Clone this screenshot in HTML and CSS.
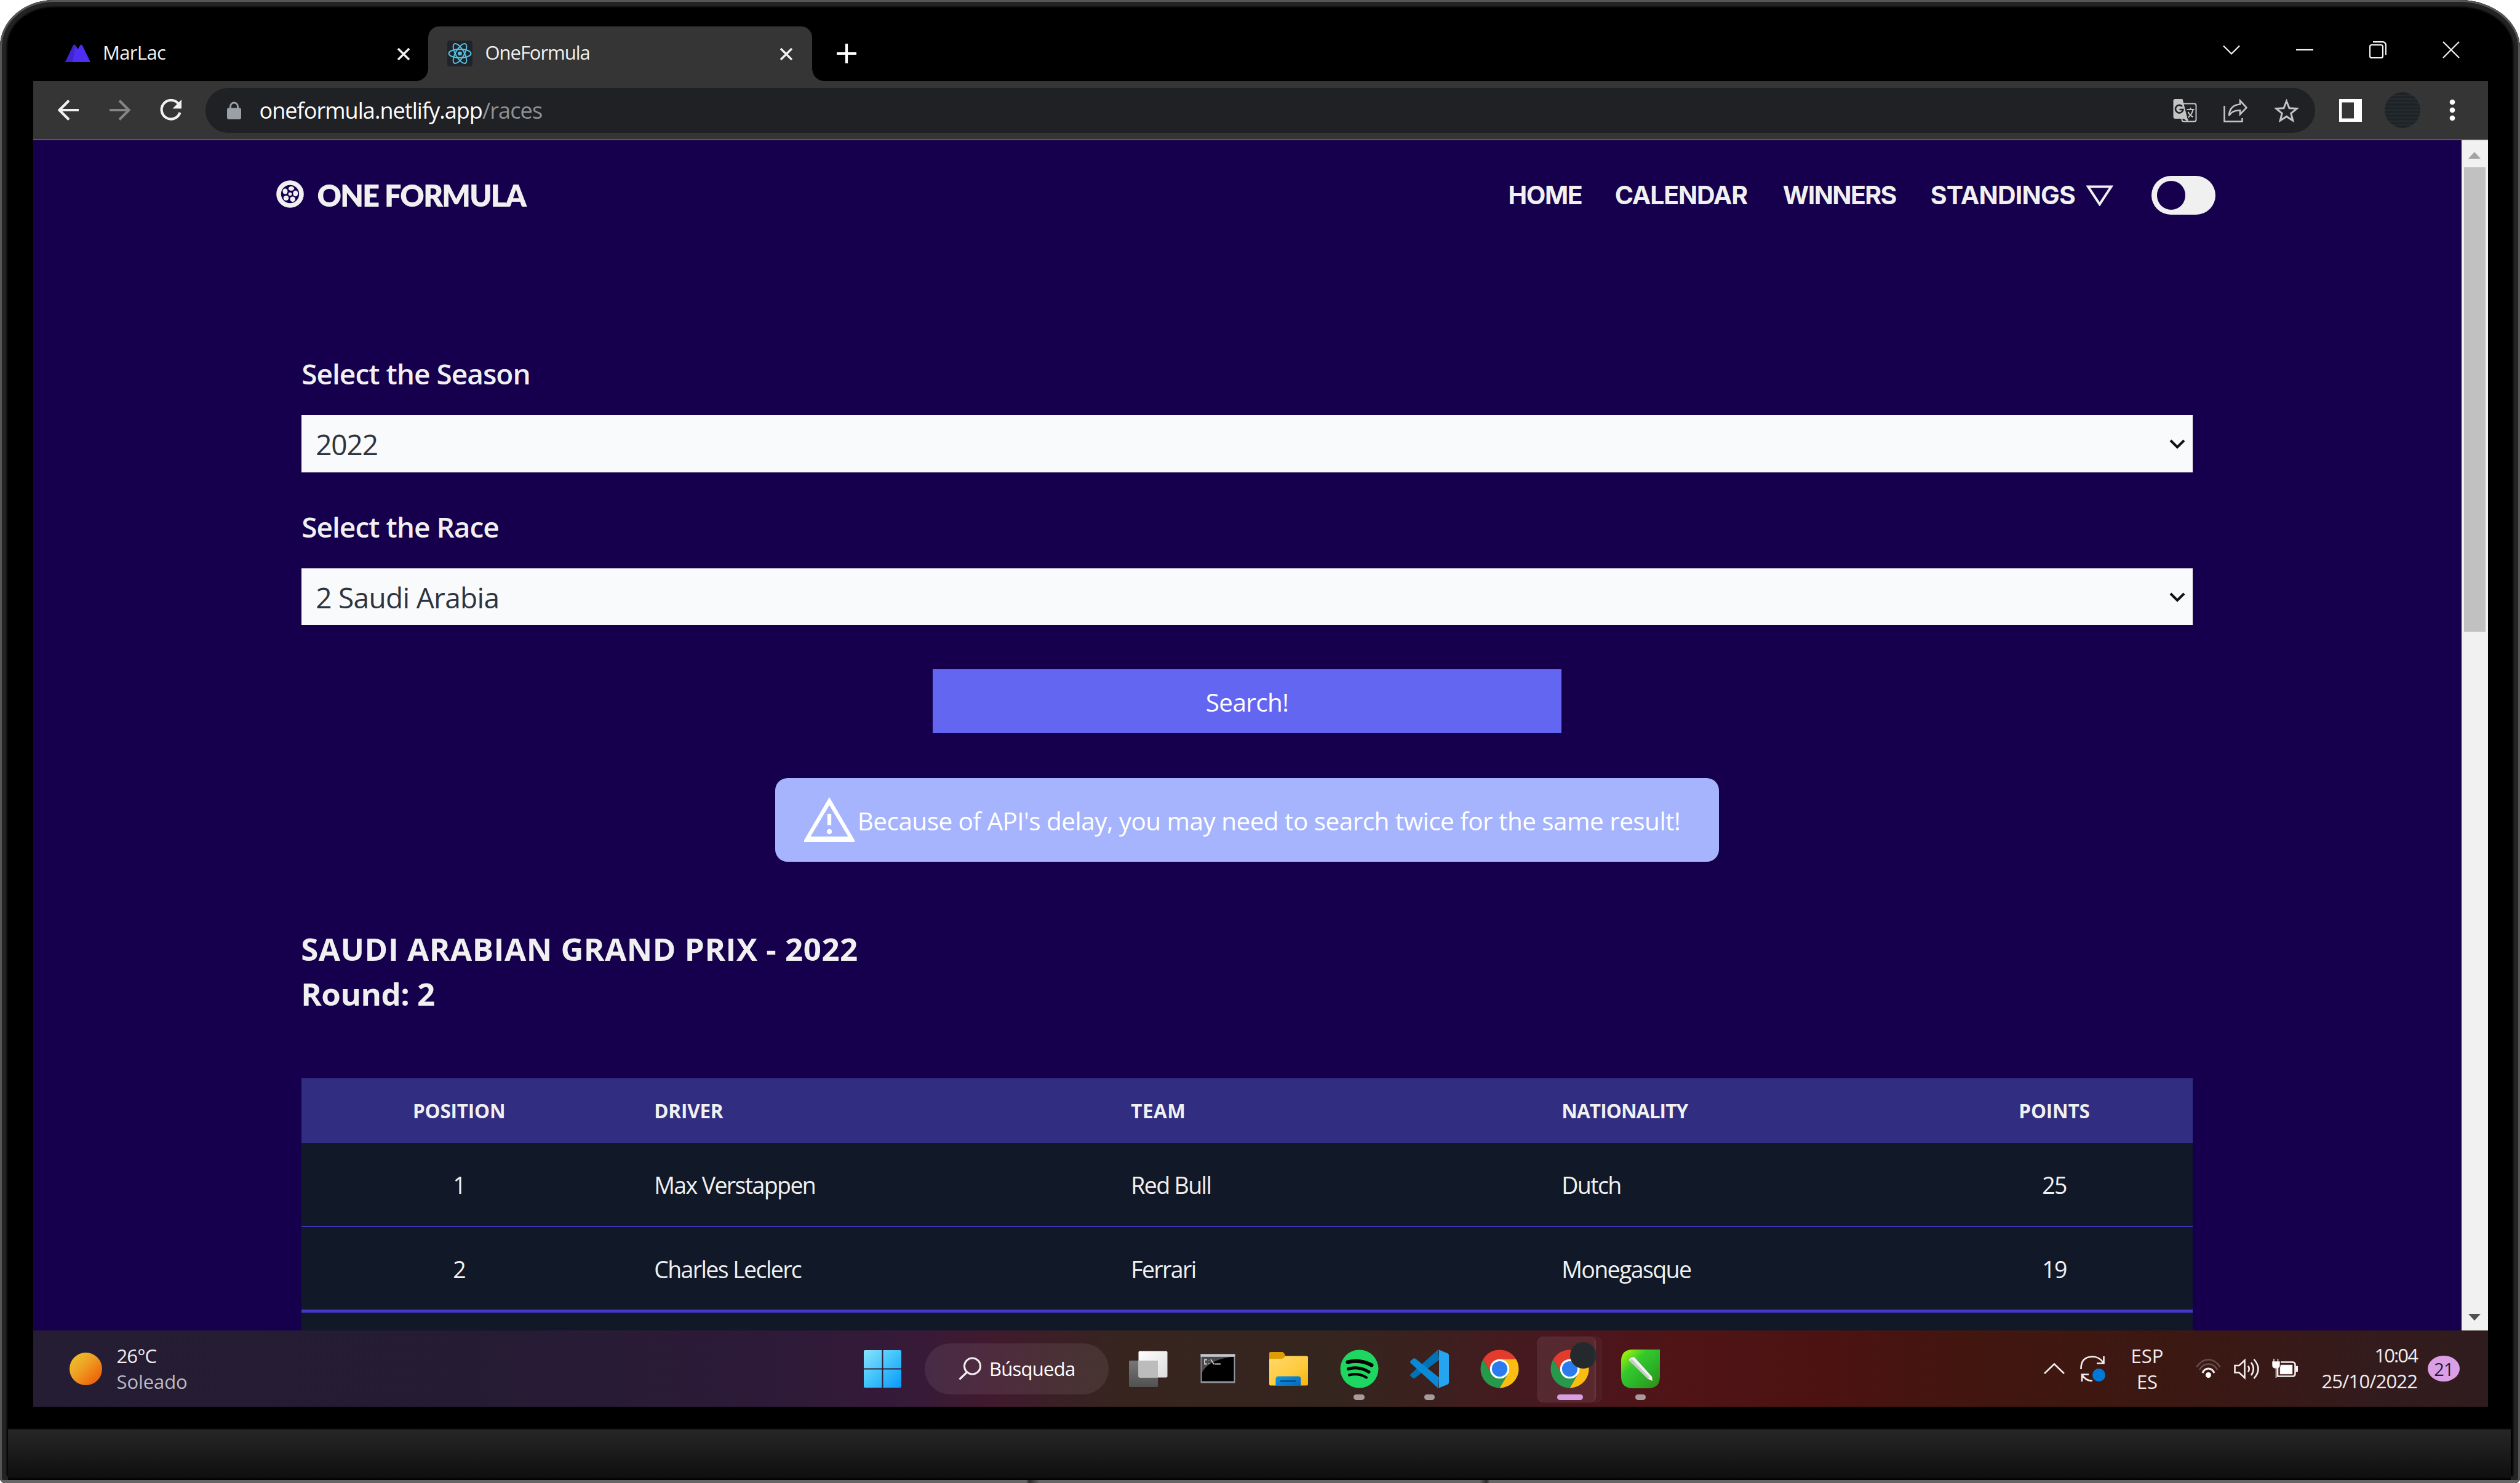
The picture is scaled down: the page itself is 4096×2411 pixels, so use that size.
FILE: index.html
```
<!DOCTYPE html>
<html lang="en">
<head>
<meta charset="utf-8">
<title>OneFormula</title>
<link rel="stylesheet" href="styles.css">
</head>
<body>
<div class="laptop">
  <header class="tabstrip">
    <div class="tab tab-first">
      <svg class="favicon" viewBox="0 0 41 42"><path fill="#4c2ff0" d="M0 35 13 8q2-3 4 0l3.500 6 3.500-6q2-3 4 0l13 27z"/><path fill="#4125d4" d="M0 35 13 8q2-3 4 0l-5 27z"/></svg>
      <span class="tab-title t-marlac">MarLac</span>
      <svg class="tab-close" viewBox="0 0 20 20"><path d="M1 1l18 18M19 1 1 19"/></svg>
    </div>
    <div class="tab tab-active">
      <svg class="favicon" viewBox="0 0 41 42"><rect width="41" height="42" rx="4" fill="#20232a"/><g fill="none" stroke="#53c1de" stroke-width="2"><ellipse cx="20.500" cy="21" rx="18" ry="7"/><ellipse cx="20.500" cy="21" rx="18" ry="7" transform="rotate(60 20.500 21)"/><ellipse cx="20.500" cy="21" rx="18" ry="7" transform="rotate(120 20.500 21)"/></g><circle cx="20.500" cy="21" r="3.300" fill="#53c1de"/></svg>
      <span class="tab-title t-of">OneFormula</span>
      <svg class="tab-close" viewBox="0 0 20 20"><path d="M1 1l18 18M19 1 1 19"/></svg>
    </div>
    <svg class="new-tab" viewBox="0 0 32 32"><path d="M16 0v32M0 16h32"/></svg>
    <div class="window-controls">
      <svg viewBox="0 0 28 28"><path d="M1 7.500 14 20.500 27 7.500"/></svg>
      <svg viewBox="0 0 28 28"><path d="M0 14h28"/></svg>
      <svg viewBox="0 0 28 28"><rect x="1" y="6" width="21" height="21" rx="3"/><path d="M6 1.200h15q6 0 6 6v15"/></svg>
      <svg viewBox="0 0 28 28"><path d="M1 1l26 26M27 1 1 27"/></svg>
    </div>
  </header>

  <div class="toolbar">
    <svg class="tool back" viewBox="0 0 35 34"><path d="M34 17H3M18 1.500 2.500 17 18 32.500"/></svg>
    <svg class="tool forward" viewBox="0 0 35 34"><path d="M1 17h31M17 1.500 32.500 17 17 32.500"/></svg>
    <svg class="tool reload" viewBox="0 0 36 36"><path d="M30.500 8.500A15.300 15.300 0 1 0 32.500 22"/><path class="solid" d="M35 1v14.500H20.500z"/></svg>
    <div class="address">
      <svg class="lock" viewBox="0 0 23 29"><path d="M5.500 12V8a6 6 0 0 1 12 0v4" fill="none" stroke="#9aa0a6" stroke-width="3"/><rect y="10.500" width="23" height="18.500" rx="3" fill="#9aa0a6"/></svg>
      <span class="url">oneformula.netlify.app<span class="path">/races</span></span>
      <svg class="addr-icon" viewBox="0 0 38 38"><rect x="14" y="7.500" width="23" height="29" rx="3" fill="none" stroke="#c4c4c4" stroke-width="2"/><path d="M3 0h12l8 32H3q-3 0-3-3V3q0-3 3-3z" fill="#c4c4c4"/><path d="m17 32 7 5v-5z" fill="#c4c4c4"/><path d="M14.500 12a6.300 6.300 0 1 0 1.500 5h-6" fill="none" stroke="#202124" stroke-width="2.600"/><path d="M22 17h12M28 14v3M32 17q-2 9-8 13M24 21q3 6 8 8" fill="none" stroke="#c4c4c4" stroke-width="2"/></svg>
      <svg class="addr-icon" viewBox="0 0 39 38"><path d="M1.500 11v25.500h29V31" fill="none" stroke="#c4c4c4" stroke-width="2.600"/><path d="M27 2.500 37.500 14 27 25v-6.500q-13-.5-18 8.500 1-17 18-18.500z" fill="none" stroke="#c4c4c4" stroke-width="2.600"/></svg>
      <svg class="addr-icon" viewBox="0 0 39 38"><path d="m19.500 3.500 4.500 11.300 12.200.8-9.400 7.700 3 11.700-10.300-6.600L9.200 35l3-11.700-9.400-7.700 12.200-.8z" fill="none" stroke="#c4c4c4" stroke-width="3"/></svg>
    </div>
    <svg class="side-panel" viewBox="0 0 37 37"><path fill="#fff" fill-rule="evenodd" d="M0 0h37v37H0zM4.500 5.500v26h19.500v-26z"/></svg>
    <span class="avatar"></span>
    <svg class="menu-dots" viewBox="0 0 10 36"><circle cx="5" cy="5" r="4.300"/><circle cx="5" cy="18" r="4.300"/><circle cx="5" cy="31" r="4.300"/></svg>
  </div>

  <div class="viewport">
    <main class="page">
      <nav class="nav">
        <svg class="wheel" viewBox="0 0 45 45"><circle cx="22.500" cy="22.500" r="18.500" fill="none" stroke="#f0f0f0" stroke-width="7.600"/><g fill="#f0f0f0"><circle cx="22.500" cy="22.500" r="2.800"/><ellipse cx="24.500" cy="13.500" rx="4.600" ry="3.600"/><ellipse cx="31.300" cy="21.500" rx="4" ry="4.800"/><ellipse cx="26.700" cy="30.700" rx="4.300" ry="4.200"/><ellipse cx="16" cy="29" rx="4.300" ry="4"/><ellipse cx="14.500" cy="18" rx="4" ry="4.500"/></g></svg>
        <span class="brand">ONE FORMULA</span>
        <div class="links">
          <span class="l-home">HOME</span><span class="l-cal">CALENDAR</span><span class="l-win">WINNERS</span><span>STANDINGS</span>
          <svg class="caret" viewBox="0 0 43.500 34"><path d="M3 2.500h37.500L21.750 31z"/></svg>
        </div>
        <span class="toggle"></span>
      </nav>
      <section class="content">
        <label class="label">Select the Season</label>
        <div class="select"><span class="s-year">2022</span><svg viewBox="0 0 26 16"><path d="M2 2l11 11L24 2"/></svg></div>
        <label class="label second">Select the Race</label>
        <div class="select"><span>2 Saudi Arabia</span><svg viewBox="0 0 26 16"><path d="M2 2l11 11L24 2"/></svg></div>
        <button class="search">Search!</button>
        <div class="alert">
          <svg viewBox="0 0 82 73"><path fill="#fff" fill-rule="evenodd" d="M41 0 82 70v3H0v-3zM41 13 10.500 64h61z"/><path fill="#fff" d="M37.800 27h6.400v18.500h-6.400z"/><circle cx="41" cy="56" r="4.200" fill="#fff"/></svg>
          <span>Because of API's delay, you may need to search twice for the same result!</span>
        </div>
        <h1 class="title">SAUDI ARABIAN GRAND PRIX - 2022</h1>
        <h2 class="title round">Round: 2</h2>
        <table class="results">
          <colgroup><col class="c1"><col class="c2"><col class="c3"><col class="c4"><col class="c5"></colgroup>
          <thead><tr><th class="mid">POSITION</th><th>DRIVER</th><th class="team">TEAM</th><th class="nat">NATIONALITY</th><th class="mid">POINTS</th></tr></thead>
          <tbody>
            <tr class="row1"><td class="mid">1</td><td>Max Verstappen</td><td>Red Bull</td><td>Dutch</td><td class="mid">25</td></tr>
            <tr class="row2"><td class="mid">2</td><td>Charles Leclerc</td><td>Ferrari</td><td>Monegasque</td><td class="mid">19</td></tr>
            <tr class="row3"><td></td><td></td><td></td><td></td><td></td></tr>
          </tbody>
        </table>
      </section>
    </main>
    <aside class="scrollbar">
      <svg class="up" viewBox="0 0 20 11"><path fill="#a3a3a3" d="M10 0l10 11H0z"/></svg>
      <div class="thumb"></div>
      <svg class="down" viewBox="0 0 20 11"><path fill="#505050" d="M0 0h20L10 11z"/></svg>
    </aside>
  </div>

  <footer class="taskbar">
    <div class="weather">
      <span class="sun"></span>
      <div><div class="temp">26°C</div><div class="cond">Soleado</div></div>
    </div>
    <svg class="start" viewBox="0 0 61 61"><defs><linearGradient id="win" x1="0" y1="0" x2="61" y2="61" gradientUnits="userSpaceOnUse"><stop offset="0" stop-color="#8ae2fb"/><stop offset=".5" stop-color="#3fc3fb"/><stop offset="1" stop-color="#0a97fa"/></linearGradient></defs><path fill="url(#win)" d="M2 0h27.500v29.500H0V2q0-2 2-2zM31.500 0H59q2 0 2 2v27.500H31.500zM0 31.500h29.500V61H2q-2 0-2-2zM31.500 31.500H61V59q0 2-2 2H31.500z"/></svg>
    <div class="search-pill">
      <svg viewBox="0 0 38 38"><circle cx="22.500" cy="15" r="13"/><path d="M13.500 25 1.500 36.500"/></svg>
      <span>Búsqueda</span>
    </div>
    <div class="apps">
      <div class="app"><svg viewBox="0 0 63 63"><defs><linearGradient id="tvb" x2="0" y2="1"><stop stop-color="#777"/><stop offset="1" stop-color="#515151"/></linearGradient><linearGradient id="tvf" x2="1" y2="1"><stop stop-color="#fff"/><stop offset="1" stop-color="#dcdcdc"/></linearGradient></defs><rect x="0" y="18" width="47" height="43" rx="2" fill="url(#tvb)"/><rect x="15.500" y="2.500" width="47" height="43" rx="2" fill="url(#tvf)"/><path d="M15.500 18H47v27.500H17.500q-2 0-2-2z" fill="#bcbcbc"/></svg></div>
      <div class="app"><svg viewBox="0 0 63 63"><rect x="2.500" y="7.500" width="56" height="47" fill="#8f949c"/><rect x="2.500" y="7.500" width="56" height="4" fill="#c3c7cd"/><rect x="4.500" y="12" width="52" height="39.500" fill="#000"/><path d="M4.500 12h47Q14 18 4.500 38z" fill="#4a4a4a"/><path d="M13 16.500H9v7h4M16 18v1M16 22v1M19 16l5 8M25 23.500h10" fill="none" stroke="#ccc" stroke-width="1.800"/></svg></div>
      <div class="app"><svg viewBox="0 0 63 63"><defs><linearGradient id="fol" x2="1" y2="1"><stop stop-color="#ffd96b"/><stop offset=".6" stop-color="#ffca3c"/><stop offset="1" stop-color="#f5b20c"/></linearGradient><linearGradient id="fob" x2="1" y2="1"><stop stop-color="#1496e0"/><stop offset="1" stop-color="#0567b8"/></linearGradient></defs><path d="M0 6q0-2 2-2h19q2 0 3 2l3 5v8H0z" fill="#dc9c05"/><path d="M0 17q0-2 2-2h18q2 0 4-2l3-2.500h34q2 0 2 2v44q0 2-2 2H2q-2 0-2-2z" fill="url(#fol)"/><path d="M10.500 59V48q0-4.500 4.500-4.500h22q4.500 0 4.500 4.500h10v11z" fill="none"/><path d="M10.500 59V48q0-4.500 4.500-4.500h32q4.500 0 4.500 4.500v11z" fill="url(#fob)"/><path d="M18 51.500h26" stroke="#064f94" stroke-width="3"/></svg></div>
      <div class="app"><svg viewBox="0 0 63 63"><circle cx="31.500" cy="31.500" r="31" fill="#1ed760"/><g fill="none" stroke="#000" stroke-linecap="round"><path d="M12.500 20.500q20-5 39 5" stroke-width="6"/><path d="M13.500 31.500q17-5 33.500 5" stroke-width="5"/><path d="M15 41.500q15-4 28 4" stroke-width="4.200"/></g></svg><i class="dot"></i></div>
      <div class="app"><svg viewBox="0 0 63 63"><path fill="#0073b7" d="M45.600 0 47 17 7.500 46.500q-1.500 1-3 0L.8 43.300q-1.500-1.500 0-3.300z"/><path fill="#0a8ad6" d="M45.600 63 47 45.500 8.500 14.800q-2-1-3.500 0L.8 18.600q-1.500 1.500 0 3.300z"/><path fill="#25a5f0" d="M45.600 0 61 6.200q2 1 2 3v44.600q0 2-2 3L45.600 63q1.400-1 1.400-3V3q0-2-1.400-3z"/></svg><i class="dot"></i></div>
      <div class="app"><svg viewBox="0 0 64 64"><g id="chrome"><path fill="#e33b2e" d="M4.700 16.250A31.500 31.500 0 0 1 59.300 16.250H32L18.400 39.900z"/><path fill="#fbbd10" d="M59.300 16.250A31.500 31.500 0 0 1 32 63.500L45.600 39.900 32 16.250z"/><path fill="#27994a" d="M32 63.500A31.500 31.500 0 0 1 4.700 16.250L18.400 39.900h27.200z"/><circle cx="32" cy="32" r="16" fill="#fff"/><circle cx="32" cy="32" r="12.800" fill="#2b7bee"/></g></svg></div>
      <div class="app current"><svg viewBox="0 0 64 64"><use href="#chrome"/></svg><b class="profile"></b><i class="bar"></i></div>
      <div class="app"><svg viewBox="0 0 63 63"><defs><linearGradient id="cor" x2="1" y2="1"><stop offset=".05" stop-color="#a6f50c"/><stop offset=".35" stop-color="#35c92c"/><stop offset=".6" stop-color="#2db52a"/><stop offset="1" stop-color="#2f8a16"/></linearGradient></defs><path fill="url(#cor)" d="M19 0h44v44q0 19-19 19H19Q0 63 0 44V19Q0 0 19 0z"/><path d="M21 12 50 44l1 7-7-3-31-30q-1-4 8-6z" fill="#f2f2f2"/><path d="M13 18l31 30 2-3-29-30z" fill="#c9c9c9"/></svg><i class="dot"></i></div>
    </div>
    <div class="tray">
      <svg class="t-chev" viewBox="0 0 34 18"><path d="M1 17 17 1.500 33 17"/></svg>
      <svg class="t-sync" viewBox="0 0 41 42"><path d="M1.500 22Q1 2 20 1.500q11 0 18 10M38.500 1v11.500H27M3 42V30.500h11M3 31q6 10 17 10"/><circle cx="30.500" cy="31.500" r="10.500" fill="#0078d7" stroke="none"/></svg>
      <div class="t-lang"><div class="esp">ESP</div><div>ES</div></div>
      <svg class="t-wifi" viewBox="0 0 41 32"><g stroke-width="2.600"><path d="M1.500 13.500Q9 1.500 20.500 1.500T39.500 13.500" opacity=".25"/><path d="M6 18Q11 8.500 20.500 8.500T35 18" opacity=".25"/><path d="M11 23q3-7 9.500-7t9.500 7" stroke-width="3.200"/></g><circle cx="20.500" cy="26.500" r="4.500" fill="#fff" stroke="none"/></svg>
      <svg class="t-vol" viewBox="0 0 43 37"><path d="M1.500 13v11.500h7L17.500 33V4.500L8.500 13zM23 13.500q3.500 5 0 10M28 8q7.500 10.500 0 21M32.500 3q14 15.500 0 31"/></svg>
      <svg class="t-bat" viewBox="0 0 42 32"><path d="M14 5.500h19q4.500 0 4.500 4.500v14q0 4.500-4.500 4.500H9V14" /><path d="M1 5h11v6q0 4-5.500 4T1 11zM3 0v5M9.500 0v5M6.500 14v17M14.500 10.500h18v14h-19v-9zM39 12.500v8h2.500v-8z" fill="#fff" stroke-width="1.500"/></svg>
      <div class="t-clock"><div class="hour">10:04</div><div>25/10/2022</div></div>
      <span class="t-badge">21</span>
    </div>
  </footer>
  <div class="chin"></div>
  <div class="foot"></div>
</div>
</body>
</html>
```

FILE: styles.css
```
* { box-sizing: border-box; }
html, body { margin: 0; padding: 0; background: #fff; overflow: hidden; }
body { font-family: "Open Sans", "Noto Sans", sans-serif; }
svg { display: block; flex: none; }

.laptop {
  width: 4096px; height: 2411px;
  padding-top: 43px;
  display: flex; flex-direction: column;
  background: #000;
  border-radius: 88px 98px 8px 8px / 76px 78px 8px 8px;
  box-shadow: inset 0 0 0 3px #565656, inset 0 0 3px 11px #232323;
  overflow: hidden;
}

/* tab strip */
.tabstrip { height: 89px; margin: 0 52.5px 0 53.5px; display: flex; align-items: center; flex: none; }
.tab { height: 89px; display: flex; align-items: center; position: relative; color: #f1f1f1; font-size: 31px; line-height: 42px; }
.tab-first { width: 642.5px; padding: 0 30px 0 52.5px; }
.tab-active { width: 623.5px; padding: 0 31.5px 0 31px; background: #353535; border-radius: 18px 18px 0 0; }
.tab-active::before, .tab-active::after { content: ""; position: absolute; bottom: 0; width: 20px; height: 20px; }
.tab-active::before { right: 100%; background: radial-gradient(circle at 0 0, transparent 19.5px, #353535 20px); }
.tab-active::after { left: 100%; background: radial-gradient(circle at 100% 0, transparent 19.5px, #353535 20px); }
.favicon { width: 41px; height: 42px; margin-top: -2px; }
.tab-title { flex: 1; margin-top: -5px; }
.t-marlac { margin-left: 20px; letter-spacing: -0.64px; }
.t-of { margin-left: 20.500px; letter-spacing: -1.04px; }
.tab-close { width: 20px; height: 20px; stroke: #f1f1f1; stroke-width: 3.4; }
.new-tab { width: 32px; height: 32px; margin-left: 40.5px; margin-top: -1px; stroke: #fff; stroke-width: 4.2; }
.window-controls { margin-left: auto; margin-right: 46px; margin-bottom: 12.500px; display: flex; gap: 91px; }
.window-controls svg { width: 28px; height: 28px; fill: none; stroke: #f5f5f5; stroke-width: 2.2; }

/* toolbar */
.toolbar { height: 96px; margin: 0 52.5px 0 53.5px; padding-left: 40px; display: flex; align-items: center; flex: none; background: #353535; border-bottom: 2.5px solid #5b595e; }
.tool { fill: none; stroke: #f1f1f1; stroke-width: 4.2; }
.back { width: 35px; height: 34px; }
.forward { width: 35px; height: 34px; margin-left: 48px; stroke: #858585; }
.reload { width: 36px; height: 36px; margin-left: 48px; }
.solid { fill: #f1f1f1; stroke: none; }
.address { width: 3428.5px; height: 73.5px; margin: 1px 0 0 38.5px; padding: 0 27px 0 35px; border-radius: 37px; background: #202124; display: flex; align-items: center; }
.lock { width: 23px; height: 29px; }
.url { flex: 1; margin-left: 29.5px; font-size: 36px; line-height: 50px; letter-spacing: -0.95px; color: #fff; }
.path { color: #8f9296; letter-spacing: -0.88px; }
.addr-icon { width: 39px; height: 38px; margin-left: 43.5px; }
.side-panel { width: 37px; height: 37px; margin-left: 39px; }
.avatar { width: 58px; height: 58px; margin-left: 37px; border-radius: 50%; background: repeating-linear-gradient(0deg, #1d2326 0 4px, #262d30 4px 6px); }
.menu-dots { width: 10px; height: 36px; margin-left: 47.5px; fill: #fff; }

/* browser viewport */
.viewport { height: 1935px; margin: 0 52.5px 0 53.5px; display: flex; flex: none; overflow: hidden; }
.page { flex: 1; background: #16004d; overflow: hidden; color: #f0f0f0; }
.scrollbar { width: 43px; background: #f1f1f1; display: flex; flex-direction: column; align-items: center; }
.up { width: 20px; height: 11px; margin-top: 18.5px; }
.thumb { width: 35px; height: 755.5px; margin-top: 14px; background: #c1c1c1; }
.down { width: 20px; height: 11px; margin-top: auto; margin-bottom: 16px; }

.nav { height: 178px; padding: 0 399.500px 0 395.5px; display: flex; align-items: center; }
.wheel { width: 45px; height: 45px; margin-top: -3px; }
.brand { margin-left: 21.500px; margin-top: -1px; font: 800 48.5px/60px Lato, "Open Sans", sans-serif; letter-spacing: -1.7px; }
.links { margin-left: auto; display: flex; align-items: center; font: 700 41px/50px Inter, "Open Sans", sans-serif; }
.links span { width: 253.200px; letter-spacing: -0.8px; }
.links .l-home { width: 173.200px; letter-spacing: -1.4px; }
.links .l-cal { width: 273.100px; letter-spacing: -1.15px; }
.links .l-win { width: 240px; letter-spacing: -1.6px; }
.caret { width: 43.500px; height: 34px; margin-top: 1px; fill: none; stroke: #f0f0f0; stroke-width: 4; }
.toggle { width: 104.500px; height: 63.500px; margin-left: 62px; margin-top: 1px; padding: 8.500px 9px; border-radius: 32px; background: #f0f0f0; }
.toggle::before { content: ""; display: block; width: 46px; height: 46.500px; border-radius: 50%; background: #16004d; }

.content { width: 3073.800px; margin-left: 436.700px; padding-top: 169.300px; display: flex; flex-direction: column; }
.label { font-size: 46px; font-weight: 600; line-height: 64px; letter-spacing: -0.98px; margin-bottom: 35.700px; }
.second { margin-top: 56.200px; }
.select { height: 92.800px; padding: 1px 12px 0 23px; display: flex; align-items: center; justify-content: space-between; background: #f9fafb; color: #2c3440; font-size: 46px; line-height: 64px; letter-spacing: -0.68px; }
.select .s-year { letter-spacing: -1.14px; }
.select svg { width: 26px; height: 16px; fill: none; stroke: #111; stroke-width: 4; }
.search { align-self: center; width: 1021.200px; height: 104.300px; margin-top: 71.700px; padding: 3px 0 0; border: 0; background: #6366f1; color: #fff; font: 400 40.500px/56px "Open Sans", sans-serif; letter-spacing: -0.6px; }
.alert { align-self: center; width: 1534.300px; height: 136px; margin-top: 72.300px; padding-left: 47.300px; display: flex; align-items: center; border-radius: 20px; background: #a5b4fc; color: #fff; font-size: 40.500px; line-height: 56px; letter-spacing: -0.55px; white-space: nowrap; }
.alert svg { width: 82px; height: 73px; }
.alert span { margin: 4px 0 0 4.500px; }
.title { margin: 0; font-size: 51px; font-weight: 700; line-height: 72.600px; letter-spacing: 0.53px; text-indent: -1px; }
.alert + .title { margin-top: 105.600px; }
.round { letter-spacing: -0.5px; }

.results { width: 3073.800px; margin-top: 101.400px; table-layout: fixed; border-collapse: separate; border-spacing: 0; background: #111827; }
.c1 { width: 512px; } .c2 { width: 775px; } .c3 { width: 700px; } .c4 { width: 636.800px; } .c5 { width: 450px; }
.results th, .results td { padding: 0 0 0 61px; text-align: left; vertical-align: middle; }
.results .mid { padding-left: 0; text-align: center; }
.results th { height: 104.600px; padding-top: 1px; background: #312e81; font-size: 31.500px; font-weight: 700; letter-spacing: -0.2px; }
.results .nat { letter-spacing: -0.85px; }
.results .team { letter-spacing: 0.46px; }
.results td { padding-top: 3px; font-size: 37.500px; line-height: 52px; letter-spacing: -1.62px; }
.row1 td { height: 137.200px; border-bottom: 2.500px solid #3c35b4; }
.row2 td { height: 139.200px; padding-top: 5px; border-bottom: 5px solid #4338ca; }
.row3 td { height: 120px; }

/* taskbar */
.taskbar {
  height: 124px; margin: 0 52.5px 0 53.5px; display: flex; align-items: center; flex: none; color: #f0ecef; font-size: 31px; line-height: 42px;
  background: linear-gradient(90deg, #251d33 0, #251c33 18%, #2d1a39 30%, #371a38 36%, #401a2e 39%, #37241f 44%, #35251f 53%, #3c201e 57%, #48171f 62%, #501416 67%, #4c1212 73%, #42160f 79%, #3b1813 88%, #331b1d 96%, #2f1c1e 100%);
}
.weather { width: 1350.500px; padding-left: 59px; display: flex; align-items: center; }
.sun { width: 53px; height: 53px; border-radius: 50%; margin-right: 24px; background: linear-gradient(135deg, #edc62e 5%, #ee9d22 45%, #ee6a0d 80%); }
.temp { letter-spacing: -0.91px; }
.cond { color: #bdb9c3; letter-spacing: -0.08px; }
.start { width: 61px; height: 61px; }
.search-pill { width: 299px; height: 83px; margin-left: 38px; padding-left: 55px; display: flex; align-items: center; border-radius: 42px; background: rgba(255,255,255,.08); letter-spacing: -0.74px; color: #fff; }
.search-pill svg { width: 38px; height: 38px; margin-right: 12px; fill: none; stroke: #f1ecef; stroke-width: 3.200; }
.apps { margin-left: 7px; display: flex; }
.app { position: relative; width: 114.300px; height: 124px; display: flex; align-items: center; justify-content: center; }
.app svg { width: 63px; height: 63px; position: relative; }
.current::before, .current::after { content: ""; position: absolute; left: 4.500px; top: 10px; width: 93px; height: 105px; border-radius: 9px; background: rgba(255,255,255,.08); border: 1.500px solid rgba(255,255,255,.06); }
.current::after { left: auto; right: 6px; width: 12px; background: rgba(255,255,255,.03); border-left: 0; border-radius: 0 9px 9px 0; }
.dot { position: absolute; bottom: 11.500px; left: 48.500px; width: 17.500px; height: 9px; border-radius: 5px; background: #a89b9d; }
.bar { position: absolute; bottom: 11.500px; left: 36px; width: 42px; height: 9px; border-radius: 5px; background: #d99de4; }
.profile { position: absolute; left: 57px; top: 18.500px; width: 43px; height: 43.500px; border-radius: 50%; background: #24292d; }

.tray { margin-left: auto; margin-right: 45.500px; display: flex; align-items: center; }
.tray svg { fill: none; stroke: #f3eeee; stroke-width: 2.600; }
.tray .t-chev { width: 34px; height: 18px; }
.tray .t-sync { width: 41px; height: 42px; margin-left: 25px; }
.t-lang { width: 60px; margin-left: 38px; margin-right: 1px; text-align: center; }
.tray .t-wifi { width: 41px; height: 32px; margin-left: 47.500px; }
.tray .t-vol { width: 43px; height: 37px; margin-left: 21px; }
.tray .t-bat { width: 42px; height: 32px; margin-left: 19px; }
.t-clock { width: 165px; margin: -3px 1.500px 0 29.500px; text-align: right; letter-spacing: -0.9px; }
.hour { letter-spacing: -1.9px; }
.t-badge { width: 52px; height: 42px; margin-left: 15.500px; border-radius: 26px / 21px; background: #db9fe6; color: #2a1a2c; font-size: 29px; line-height: 43px; letter-spacing: -0.8px; text-align: center; }

/* laptop base */
.chin { flex: none; height: 119px; margin: 0 15px 0 13px; background: linear-gradient(180deg, #000 0 35px, #262626 38px, #1d1d1d 70px, #131313 100px, #101010 114px, #000 119px); }
.foot { flex: 1; background: linear-gradient(90deg, #666 0 1668px, #2b2b2b 1673px, #666 1690px 2405px, #2b2b2b 2416px, #666 2422px 100%); }
```
